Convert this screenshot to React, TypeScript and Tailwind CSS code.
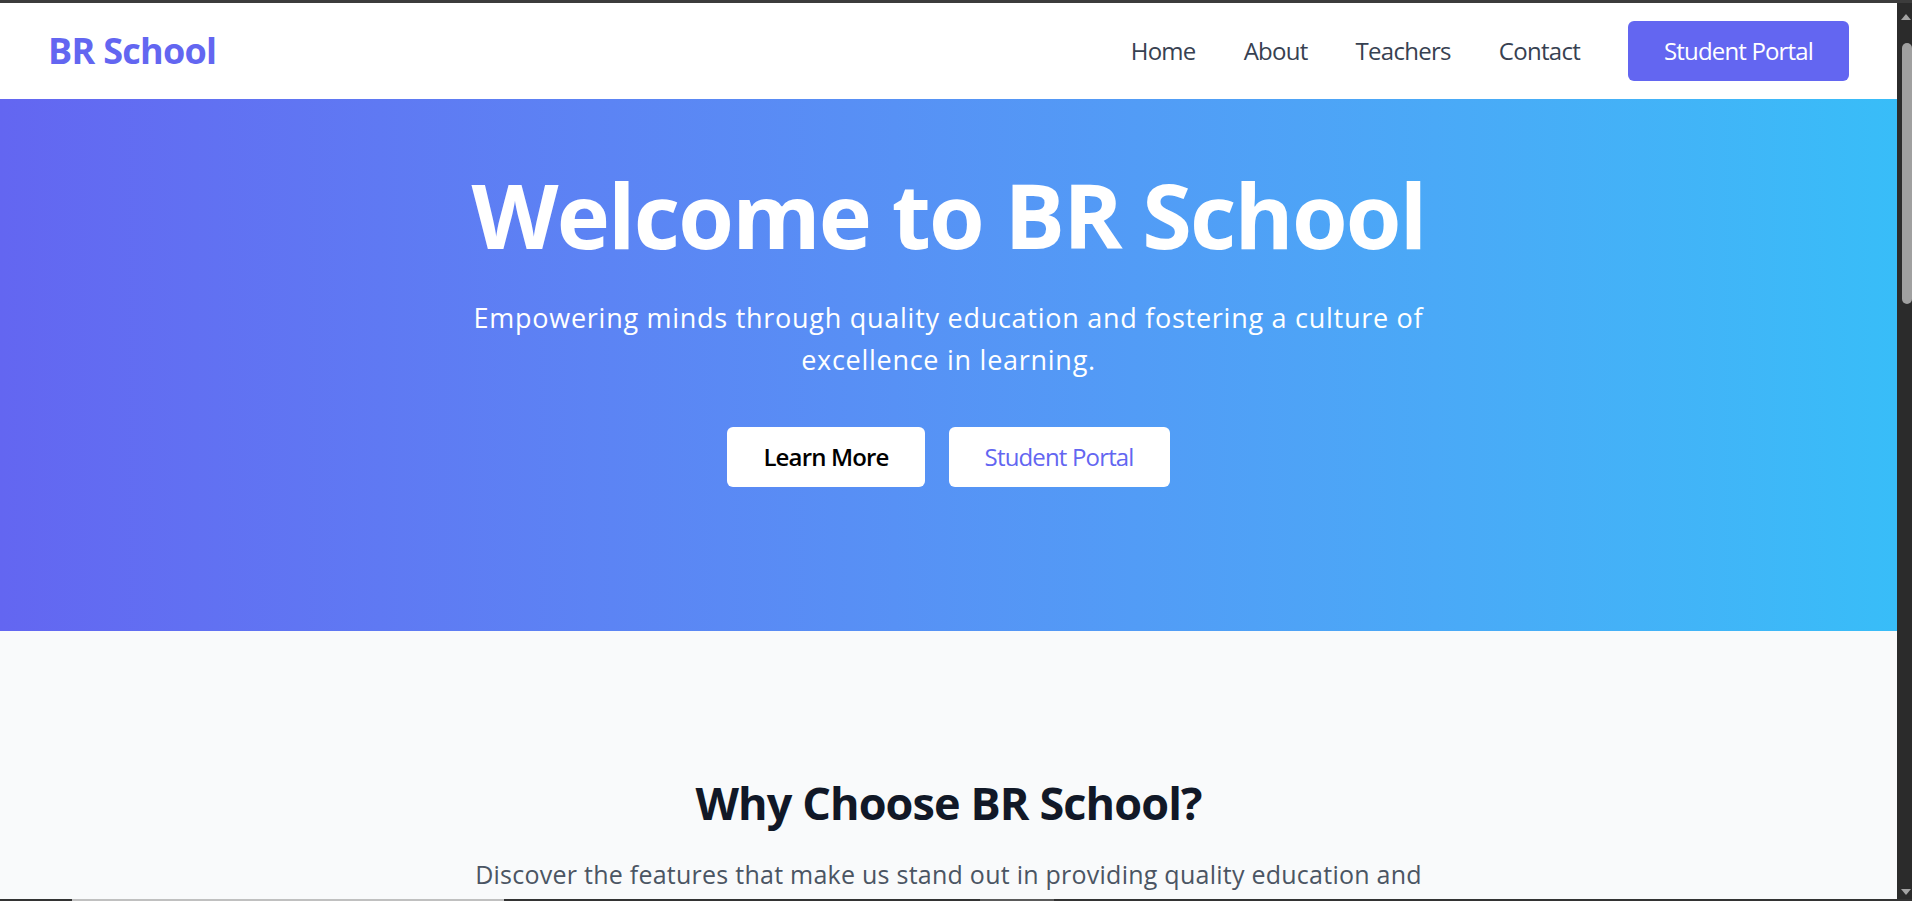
import React from "react";

const font = { fontFamily: '"Open Sans", "Noto Sans", sans-serif' };

const navLinks = ["Home", "About", "Teachers", "Contact"];

const Header = () => {
  return (
    <header className="h-[96px] shrink-0 bg-white flex items-center justify-between px-[48px]">
      <a href="#" className="text-[36px] leading-[54px] font-bold text-[#6366f1] tracking-[-0.02em]">
        BR School
      </a>
      <nav className="flex items-center">
        <ul className="flex items-center gap-[48px] mr-[48px]">
          {navLinks.map((link) => (
            <li key={link}>
              <a href="#" className="text-[24px] leading-[36px] text-[#374151] tracking-[-0.03em]">
                {link}
              </a>
            </li>
          ))}
        </ul>
        <a
          href="#"
          className="h-[60px] px-[36px] flex items-center rounded-[6px] bg-[#6366f1] text-white text-[24px] tracking-[-0.035em]"
        >
          Student Portal
        </a>
      </nav>
    </header>
  );
};

const Hero = () => {
  return (
    <section className="shrink-0 h-[532px] bg-linear-to-r from-[#6366f1] to-[#38bdf8] flex flex-col items-center pt-[70px] text-white">
      <h1 className="text-[90px] leading-[90px] font-bold tracking-[-0.02em] mb-[38px]">
        Welcome to BR School
      </h1>
      <p className="max-w-[1008px] text-center text-[27px] leading-[42px] tracking-[0.027em] mb-[46px]">
        Empowering minds through quality education and fostering a culture of excellence in learning.
      </p>
      <div className="flex gap-[24px]">
        <a
          href="#"
          className="h-[60px] px-[36px] flex items-center rounded-[6px] bg-white text-black font-semibold text-[24px] tracking-[-0.035em]"
        >
          Learn More
        </a>
        <a
          href="#"
          className="h-[60px] px-[36px] flex items-center rounded-[6px] bg-white text-[#6366f1] text-[24px] tracking-[-0.035em]"
        >
          Student Portal
        </a>
      </div>
    </section>
  );
};

const Features = () => {
  return (
    <section className="flex-1 bg-[#f9fafb] flex flex-col items-center pt-[145px]">
      <h2 className="text-[45px] leading-[54px] font-bold text-[#111827] tracking-[-0.02em] mb-[23px]">
        Why Choose BR School?
      </h2>
      <p className="max-w-[1008px] text-center text-[25px] leading-[42px] text-[#4b5563] tracking-[0.01em]">
        Discover the features that make us stand out in providing quality education and holistic development.
      </p>
    </section>
  );
};

const Scrollbar = () => {
  return (
    <div className="w-[15px] shrink-0 bg-[#2b2b2b] flex flex-col items-end">
      <div className="h-[12px] w-full flex justify-end pr-[1px] pt-[11px] mb-[28px]">
        <div className="w-0 h-0 border-l-[5px] border-r-[5px] border-b-[6px] border-l-transparent border-r-transparent border-b-[#a3a3a3]" />
      </div>
      <div className="w-[10px] h-[261px] rounded-full bg-[#a0a0a0]" />
      <div className="flex-1" />
      <div className="w-0 h-0 mb-[4px] mr-[1px] border-l-[5px] border-r-[5px] border-t-[6px] border-l-transparent border-r-transparent border-t-[#a3a3a3]" />
    </div>
  );
};

export default function App() {
  return (
    <div className="h-[901px] w-full overflow-hidden flex flex-col bg-[#2b2b2b]" style={font}>
      <div className="h-[3px] shrink-0 bg-[#3c3c3c]" />
      <div className="flex flex-1 min-h-0">
        <main className="flex-1 min-w-0 flex flex-col overflow-hidden">
          <Header />
          <Hero />
          <Features />
        </main>
        <Scrollbar />
      </div>
      <div className="h-[2px] shrink-0 flex">
        <div className="w-[72px] bg-[#333333]" />
        <div className="w-[432px] bg-[#c0c0c0]" />
        <div className="w-[476px] bg-[#333333]" />
        <div className="w-[74px] bg-[#5a5a5a]" />
        <div className="flex-1 bg-[#333333]" />
      </div>
    </div>
  );
}
